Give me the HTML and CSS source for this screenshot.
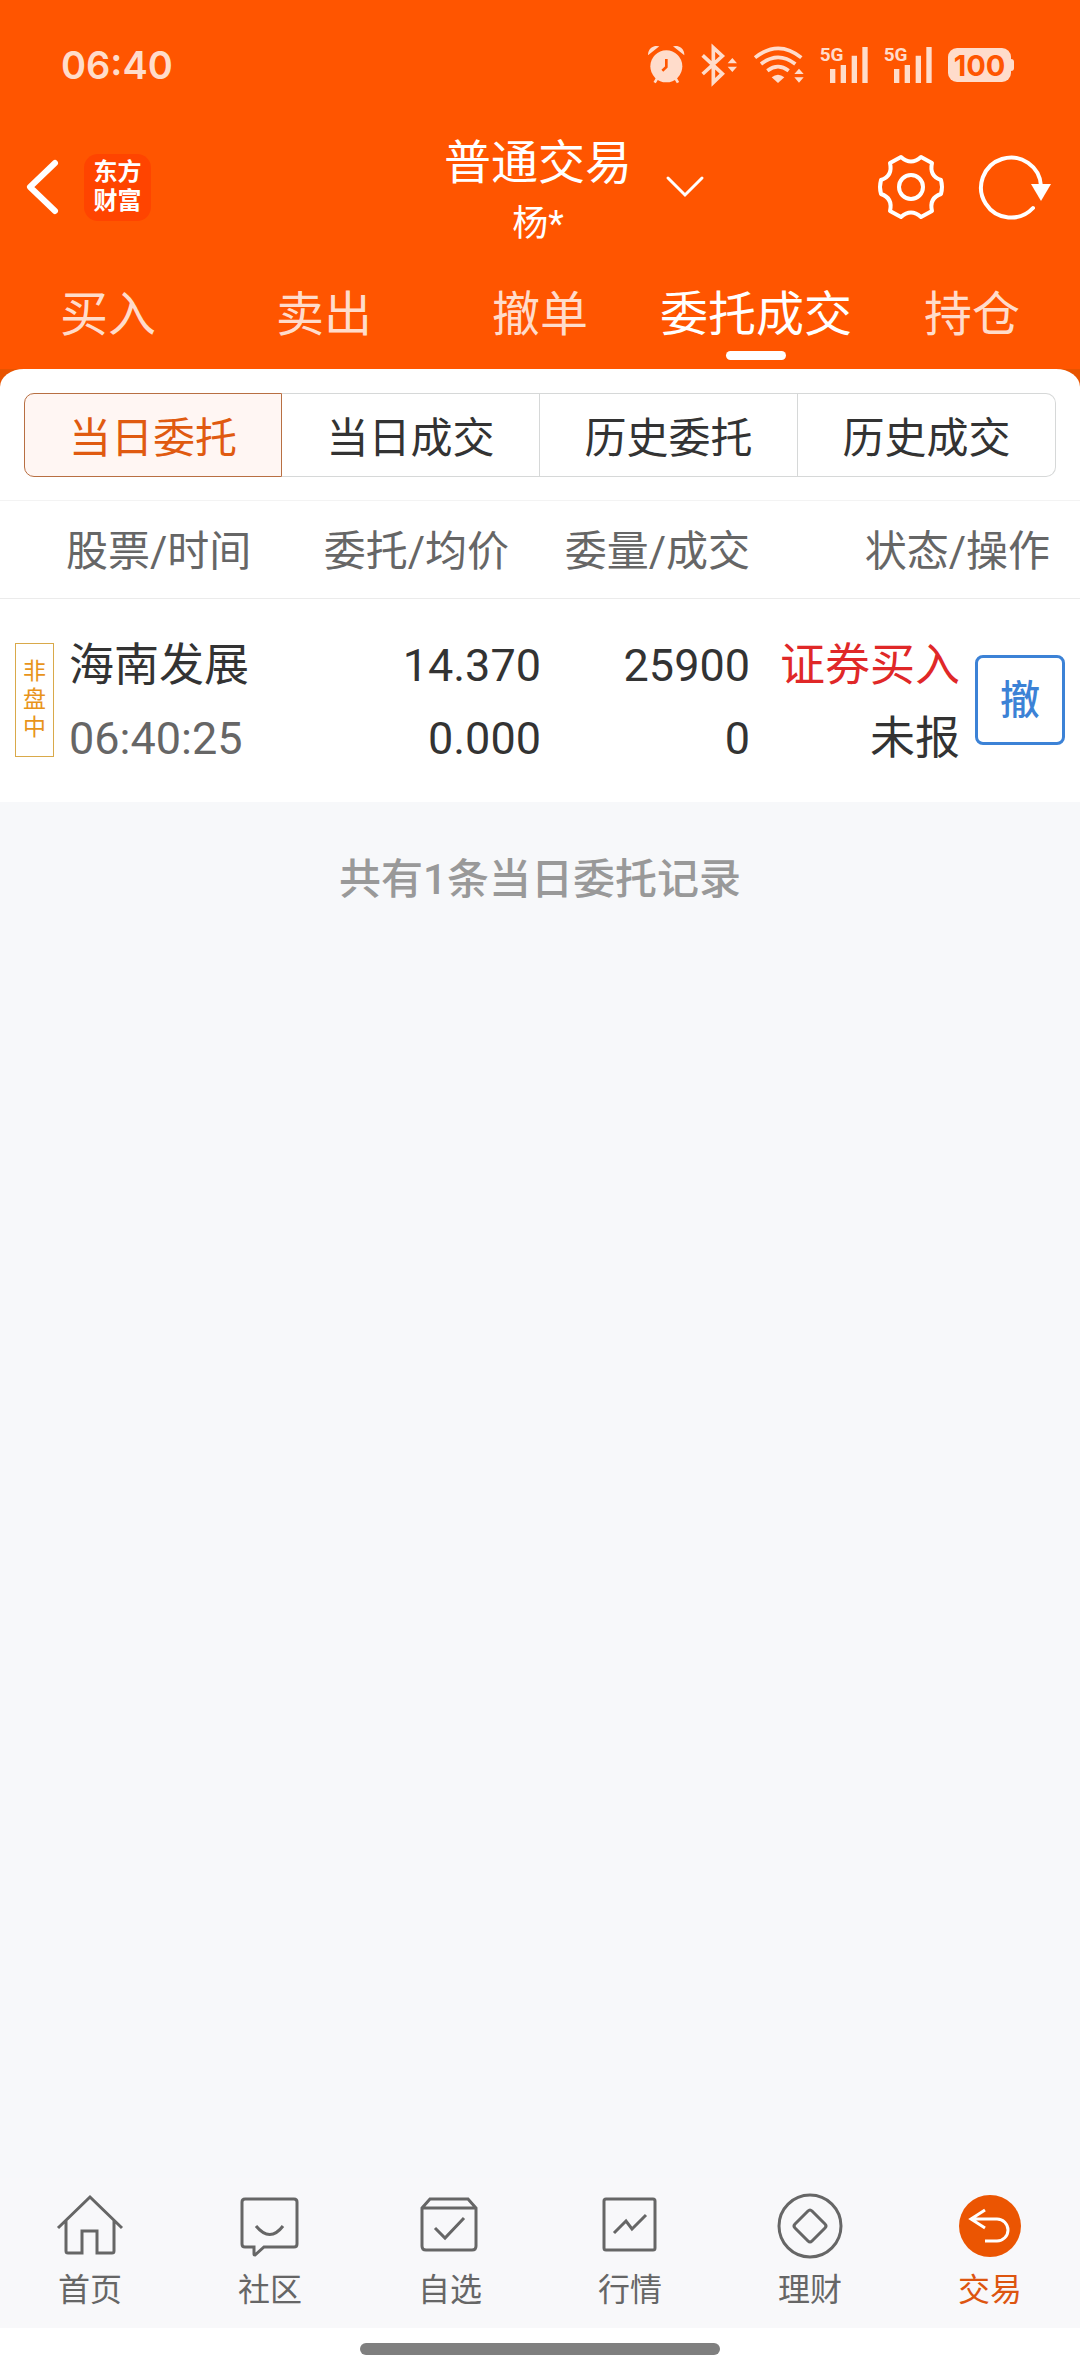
FILE: index.html
```
<!DOCTYPE html>
<html lang="zh-CN">
<head>
    <meta charset="UTF-8">
    <meta name="viewport" content="width=device-width, initial-scale=1.0">
    <title>委托成交</title>
    <link rel="stylesheet" href="styles.css">
</head>
<body>
    <header class="top">
        <div class="status-bar">
            <span class="clock">06:40</span>
            <div class="status-icons">
                <!-- alarm -->
                <svg width="37" height="40" viewBox="88 75 111 120">
                    <circle cx="143" cy="139" r="48" class="s-fill"/>
                    <path d="M88 106a26 26 0 0 1 34-27zM197 106a26 26 0 0 0-34-27z" class="s-fill"/>
                    <path d="M116 174l-8 14M170 174l8 14" stroke-width="8" class="s-line"/>
                    <path d="M143 117v24l-12 11" stroke-width="8" class="s-cut"/>
                </svg>
                <!-- bluetooth -->
                <svg width="36" height="40" viewBox="249 75 108 120">
                    <path d="M254 106l59 55-27 26V83l27 25-59 54" stroke-width="11" class="s-line"/>
                    <path d="M329 130l14-16 14 16zM329 140l14 16 14-16z" class="s-fill"/>
                </svg>
                <!-- wifi -->
                <svg width="51" height="40" viewBox="402 75 153 120">
                    <path d="M408 113q70-56 139 0M426 132q51-40 103 0M445 152q32-24 64 0" stroke-width="11" class="s-line"/>
                    <path d="M458 172q19-15 38 0l-19 17z" class="s-fill"/>
                    <path d="M526 162l14-16 14 16zM526 172l14 16 14-16z" class="s-fill"/>
                </svg>
                <svg width="48" height="40" viewBox="597 75 144 120">
                    <text x="596" y="124" class="net">5G</text>
                    <path d="M635 147v42M667 135v54M700 107v82M732 81v108" stroke-width="16" class="s-line"/>
                </svg>
                <svg width="48" height="40" viewBox="597 75 144 120">
                    <text x="596" y="124" class="net">5G</text>
                    <path d="M635 147v42M667 135v54M700 107v82M732 81v108" stroke-width="16" class="s-line"/>
                </svg>
                <div class="battery">100</div>
            </div>
        </div>

        <div class="title-bar">
            <div class="title-left">
                <button class="icon-btn" aria-label="返回">
                    <svg width="36" height="60" viewBox="0 0 36 60"><path d="M30 6L5 30l25 24" fill="none" stroke="#fff" stroke-width="6" stroke-linecap="round" stroke-linejoin="round"/></svg>
                </button>
                <div class="logo">东方<br>财富</div>
            </div>
            <button class="account">
                <span class="account-type">普通交易</span>
                <span class="account-name">杨*</span>
                <svg class="account-arrow" width="38" height="22" viewBox="0 0 38 22"><path d="M2 2l17 17L36 2" fill="none" stroke="#fff" stroke-width="3" stroke-linecap="round"/></svg>
            </button>
            <div class="title-right">
                <button class="icon-btn" aria-label="设置">
                    <svg width="68" height="68" viewBox="-34 -34 68 68" fill="none" stroke="#fff" stroke-width="4" stroke-linejoin="round">
                        <path d="M-10-30Q0-21 10-30L21-24Q18-11 30-7Q32 0 30 7Q18 11 21 24L10 30Q0 21-10 30L-21 24Q-18 11-30 7Q-32 0-30-7Q-18-11-21-24Z"/>
                        <circle r="12"/>
                    </svg>
                </button>
                <button class="icon-btn" aria-label="刷新">
                    <svg width="74" height="68" viewBox="-34 -34 74 68">
                        <path d="M22 21A30 30 0 1 1 30-1" fill="none" stroke="#fff" stroke-width="4" stroke-linecap="round"/>
                        <path d="M20-3h20L30 14z" fill="#fff"/>
                    </svg>
                </button>
            </div>
        </div>

        <nav class="tabs">
            <a href="#" class="tab">买入</a>
            <a href="#" class="tab">卖出</a>
            <a href="#" class="tab">撤单</a>
            <a href="#" class="tab active">委托成交</a>
            <a href="#" class="tab">持仓</a>
        </nav>
    </header>

    <main class="content">
        <div class="panel">
            <div class="segments">
                <button class="segment active">当日委托</button>
                <button class="segment">当日成交</button>
                <button class="segment">历史委托</button>
                <button class="segment">历史成交</button>
            </div>
        </div>

        <table class="orders">
            <colgroup>
                <col>
                <col class="col-price">
                <col class="col-amount">
                <col class="col-state">
                <col class="col-action">
            </colgroup>
            <thead>
                <tr>
                    <th class="th-stock">股票/时间</th>
                    <th class="th-price">委托/均价</th>
                    <th>委量/成交</th>
                    <th colspan="2" class="th-state">状态/操作</th>
                </tr>
            </thead>
            <tbody>
                <tr>
                    <td>
                        <div class="stock">
                            <span class="badge">非盘中</span>
                            <div class="lines">
                                <div>海南发展</div>
                                <div class="time">06:40:25</div>
                            </div>
                        </div>
                    </td>
                    <td>
                        <div class="lines">
                            <div>14.370</div>
                            <div>0.000</div>
                        </div>
                    </td>
                    <td>
                        <div class="lines">
                            <div>25900</div>
                            <div>0</div>
                        </div>
                    </td>
                    <td>
                        <div class="lines">
                            <div class="buy">证券买入</div>
                            <div>未报</div>
                        </div>
                    </td>
                    <td class="action"><button class="cancel">撤</button></td>
                </tr>
            </tbody>
        </table>

        <p class="summary">共有1条当日委托记录</p>
    </main>

    <nav class="bottom-nav">
        <a href="#" class="nav-item">
            <svg class="nav-icon" viewBox="0 0 72 72"><path d="M4 38L36 7l32 31M12 31v30q0 2 2 2h14V41h15v22h15q2 0 2-2V31"/></svg>
            首页
        </a>
        <a href="#" class="nav-item">
            <svg class="nav-icon" viewBox="0 0 72 72"><path d="M11 9h49q3 0 3 3v42q0 3-3 3H30l-9 8q-1 0-1-1v-7h-9q-3 0-3-3V12q0-3 3-3zM22 36q14 17 27 0"/></svg>
            社区
        </a>
        <a href="#" class="nav-item">
            <svg class="nav-icon" viewBox="0 0 72 72"><path d="M8 18l8-9h38l8 9v38q0 4-4 4H12q-4 0-4-4zM8 18h54M21 38l10 10 19-20"/></svg>
            自选
        </a>
        <a href="#" class="nav-item">
            <svg class="nav-icon" viewBox="0 0 72 72"><rect x="10" y="9" width="51" height="51" rx="2"/><path d="M20 43l12-12 6 8 14-14"/></svg>
            行情
        </a>
        <a href="#" class="nav-item">
            <svg class="nav-icon" viewBox="0 0 72 72"><circle cx="36" cy="36" r="31"/><path d="M34 21q2-2 4 0l13 13q2 2 0 4L38 51q-2 2-4 0L21 38q-2-2 0-4z"/></svg>
            理财
        </a>
        <a href="#" class="nav-item active">
            <svg class="nav-icon" viewBox="0 0 72 72"><circle cx="36" cy="36" r="31" class="disc"/><path d="M31 20L17 29l14 9M18 29h25a11 11 0 0 1 0 22H31"/></svg>
            交易
        </a>
    </nav>
    <div class="gesture"></div>
</body>
</html>
```

FILE: styles.css
```
* {
    box-sizing: border-box;
}
body {
    margin: 0;
    min-height: 100vh;
    display: flex;
    flex-direction: column;
    background: #f7f8fa;
    color: #333;
    font-family: Roboto, "Noto Sans CJK SC", sans-serif;
}
button {
    font: inherit;
    color: inherit;
    background: none;
    border: none;
    padding: 0;
    cursor: pointer;
}
a {
    color: inherit;
    text-decoration: none;
}
svg {
    display: block;
    overflow: visible;
}

/* header */
.top {
    background: #ff5500;
    color: #fff;
}
.status-bar {
    display: flex;
    justify-content: space-between;
    align-items: center;
    height: 126px;
    padding: 4px 66px 0 61px;
    color: #ffdccb;
    font-family: Inter, Roboto, sans-serif;
    font-weight: 600;
}
.clock {
    font-size: 38px;
}
.status-icons {
    display: flex;
    align-items: center;
    gap: 16px;
}
.s-fill {
    fill: #ffdccb;
}
.s-line {
    fill: none;
    stroke: #ffdccb;
}
.s-cut {
    fill: none;
    stroke: #ff5500;
}
.net {
    font-family: Roboto, sans-serif;
    font-size: 57px;
    font-weight: 700;
    fill: #ffdccb;
}
.battery {
    position: relative;
    width: 63px;
    height: 34px;
    margin-right: 3px;
    border-radius: 9px;
    background: #ffdccb;
    color: #ff5500;
    font-size: 29px;
    font-weight: 700;
    line-height: 35px;
    text-align: center;
}
.battery::after {
    content: "";
    position: absolute;
    left: 63px;
    top: 11px;
    width: 3px;
    height: 12px;
    border-radius: 0 3px 3px 0;
    background: #ffdccb;
}
.title-bar {
    display: grid;
    grid-template-columns: 1fr auto 1fr;
    align-items: center;
    height: 122px;
    padding: 0 29px 0 25px;
}
.title-left {
    display: flex;
    align-items: center;
    gap: 23px;
}
.logo {
    width: 67px;
    height: 67px;
    padding-top: 4px;
    border-radius: 14px;
    background: #ff4400;
    font-size: 24px;
    font-weight: 700;
    line-height: 29px;
    text-align: center;
}
.account {
    position: relative;
    display: flex;
    flex-direction: column;
    align-items: center;
}
.account-type {
    font-size: 47px;
    line-height: 74px;
}
.account-name {
    font-size: 36px;
    line-height: 48px;
}
.account-arrow {
    position: absolute;
    left: 100%;
    top: 50%;
    margin: -11px 0 0 34px;
}
.title-right {
    display: flex;
    justify-content: flex-end;
    gap: 32px;
}
.tabs {
    display: grid;
    grid-template-columns: repeat(5, 1fr);
    padding-bottom: 9px;
}
.tab {
    display: flex;
    flex-direction: column;
    align-items: center;
    padding-top: 31px;
    font-size: 48px;
    line-height: 72px;
    color: #ffdccb;
}
.tab::after {
    content: "";
    width: 60px;
    height: 9px;
    border-radius: 5px;
}
.tab.active {
    color: #fff;
}
.tab.active::after {
    background: #fff;
}

/* orders */
.content {
    flex: 1;
    /* orange shows behind the rounded corners of the panel */
    background: linear-gradient(#e85400 30px, #f7f8fa 30px);
}
.panel {
    padding: 24px 24px 23px;
    border-bottom: 1px solid #f3f3f3;
    border-radius: 24px 24px 0 0 / 18px 18px 0 0;
    background: #fff;
}
.segments {
    display: grid;
    grid-template-columns: repeat(4, 1fr);
}
.segment {
    height: 84px;
    padding-bottom: 2px;
    border: 1px solid #d6d8d8;
    border-left-width: 0;
    font-size: 42px;
}
.segment:last-child {
    border-radius: 0 10px 10px 0;
}
.segment.active {
    border: 1px solid #b86f42;
    border-radius: 10px 0 0 10px;
    background: #fff6f3;
    color: #e05a10;
}
.orders {
    width: 100%;
    table-layout: fixed;
    border-collapse: collapse;
    background: #fff;
    text-align: right;
}
.col-price {
    width: 240px;
}
.col-amount {
    width: 209px;
}
.col-state {
    width: 210px;
}
.col-action {
    width: 120px;
}
th {
    height: 97px;
    padding: 0 0 4px;
    border-bottom: 1px solid #ebebeb;
    color: #666;
    font-size: 42px;
    font-weight: inherit;
    text-align: right;
}
.orders .th-stock {
    padding-left: 66px;
    text-align: left;
}
.orders .th-price {
    padding-right: 32px;
}
.orders .th-state {
    padding-right: 30px;
}
td {
    height: 204px;
    padding: 0;
    font-size: 45px;
    line-height: 73px;
}
.lines {
    padding-top: 4px;
}
.stock {
    display: flex;
    align-items: center;
    gap: 15px;
    padding-left: 15px;
    text-align: left;
}
.badge {
    width: 39px;
    padding: 14px 7px;
    border: 1px solid #d9a94a;
    color: #e8941a;
    font-size: 23px;
    line-height: 28px;
}
.time {
    color: #666;
}
.buy {
    color: #e02828;
}
.action {
    padding-right: 15px;
}
.cancel {
    display: block;
    width: 90px;
    height: 90px;
    margin-left: auto;
    border: 3px solid #3c82d6;
    border-radius: 8px;
    color: #3c82d6;
    font-size: 40px;
    font-weight: 500;
}
.summary {
    margin: 0;
    padding-top: 48px;
    color: #999;
    font-size: 42px;
    font-weight: 500;
    line-height: 60px;
    text-align: center;
}

/* bottom navigation */
.bottom-nav {
    display: grid;
    grid-template-columns: repeat(6, 1fr);
    padding: 12px 0 15px;
    background: #f8f8fa;
}
.nav-item {
    display: flex;
    flex-direction: column;
    align-items: center;
    gap: 5px;
    color: #666;
    font-size: 32px;
    line-height: 46px;
}
.nav-icon {
    width: 72px;
    height: 72px;
    fill: none;
    stroke: #666;
    stroke-width: 3;
}
.nav-item.active {
    color: #dd5510;
}
.nav-item.active .nav-icon {
    stroke: #fff;
}
.nav-icon .disc {
    fill: #eb5502;
    stroke: none;
}
.gesture {
    height: 48px;
    padding-top: 15px;
    background: #fff;
}
.gesture::before {
    content: "";
    display: block;
    width: calc(100% / 3);
    height: 12px;
    margin: 0 auto;
    border-radius: 6px;
    background: #7f7f7f;
}
```
